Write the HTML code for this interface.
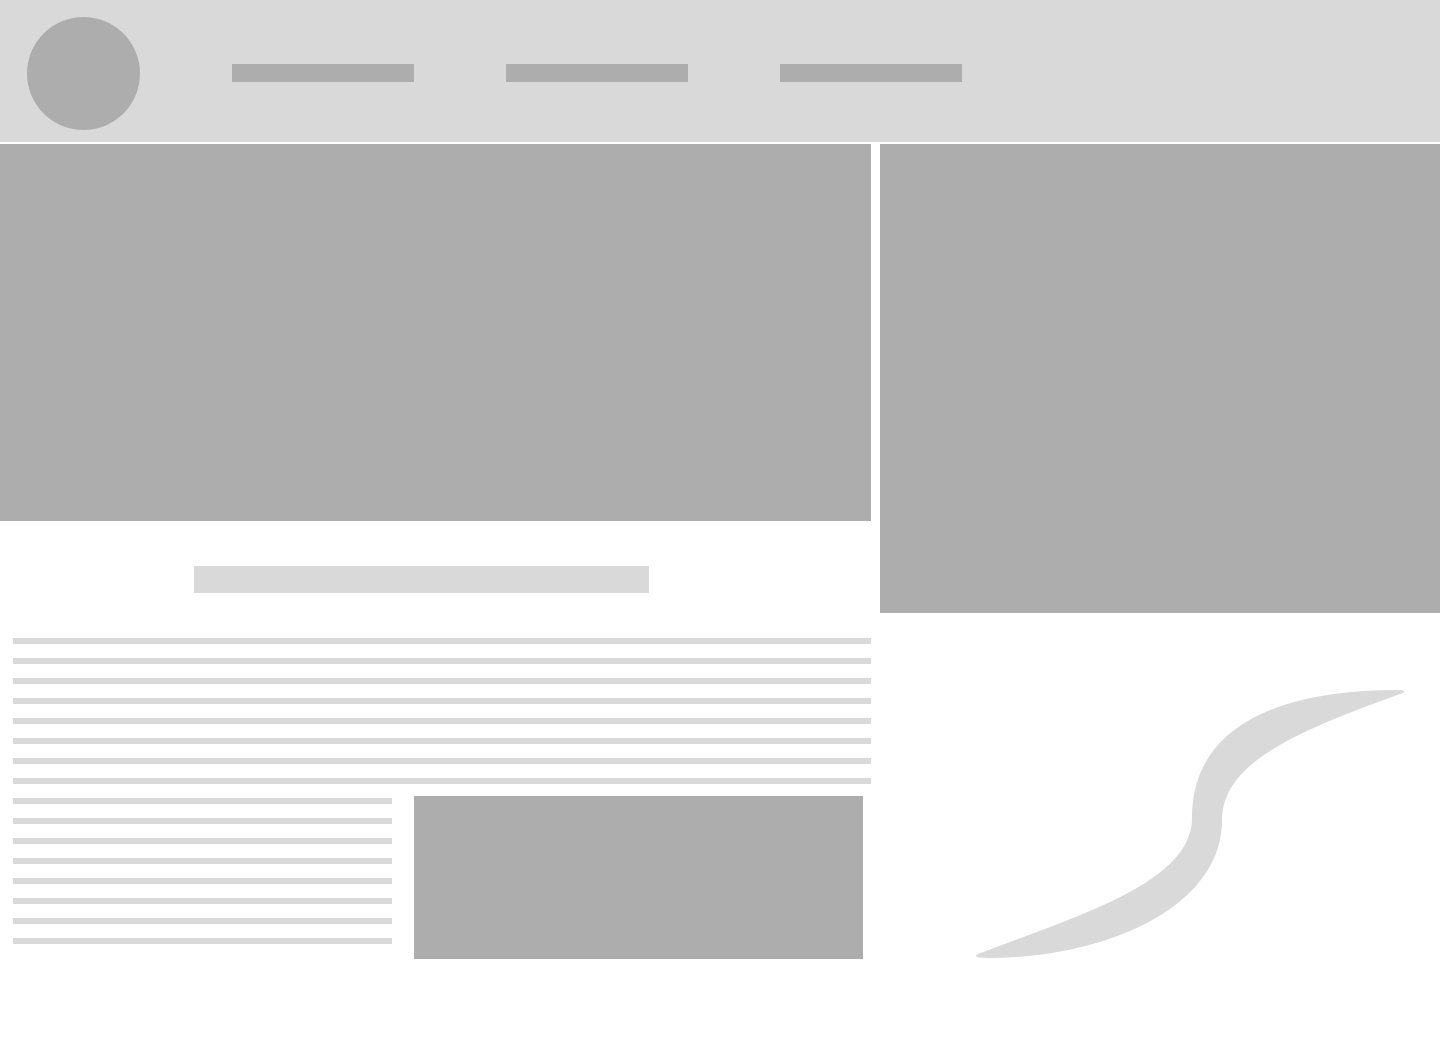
<!DOCTYPE html>
<html><head><meta charset="utf-8"><style>
html,body{margin:0;padding:0;background:#fff;width:1440px;height:1055px;overflow:hidden;position:relative}
div{position:absolute}
.g{background:#adadad}
.l{background:#d9d9d9}
</style></head><body>
<div class="l" style="left:0;top:0;width:1440px;height:142px"></div>
<div class="g" style="left:27px;top:17px;width:113px;height:113px;border-radius:50%"></div>
<div class="g" style="left:232px;top:64px;width:182px;height:18px"></div>
<div class="g" style="left:506px;top:64px;width:182px;height:18px"></div>
<div class="g" style="left:780px;top:64px;width:182px;height:18px"></div>
<div class="g" style="left:0;top:144px;width:871px;height:377px"></div>
<div class="g" style="left:880px;top:144px;width:560px;height:469px"></div>
<div class="l" style="left:194px;top:566px;width:455px;height:27px"></div>
<div class="l" style="left:13px;top:638px;width:858px;height:6px"></div>
<div class="l" style="left:13px;top:658px;width:858px;height:6px"></div>
<div class="l" style="left:13px;top:678px;width:858px;height:6px"></div>
<div class="l" style="left:13px;top:698px;width:858px;height:6px"></div>
<div class="l" style="left:13px;top:718px;width:858px;height:6px"></div>
<div class="l" style="left:13px;top:738px;width:858px;height:6px"></div>
<div class="l" style="left:13px;top:758px;width:858px;height:6px"></div>
<div class="l" style="left:13px;top:778px;width:858px;height:6px"></div>
<div class="l" style="left:13px;top:798px;width:379px;height:6px"></div>
<div class="l" style="left:13px;top:818px;width:379px;height:6px"></div>
<div class="l" style="left:13px;top:838px;width:379px;height:6px"></div>
<div class="l" style="left:13px;top:858px;width:379px;height:6px"></div>
<div class="l" style="left:13px;top:878px;width:379px;height:6px"></div>
<div class="l" style="left:13px;top:898px;width:379px;height:6px"></div>
<div class="l" style="left:13px;top:918px;width:379px;height:6px"></div>
<div class="l" style="left:13px;top:938px;width:379px;height:6px"></div>
<div class="g" style="left:414px;top:796px;width:449px;height:163px"></div>
<svg style="position:absolute;left:0;top:0" width="1440" height="1055">
<path fill="#d9d9d9" d="M978,954 C1080,915 1192,882 1192,818 C1192,720 1290,690 1398,690 C1406,690 1406,692 1400,694 C1300,730 1222,762 1222,820 C1222,910 1100,958 990,958 C974,958 974,956 978,954 Z"/>
</svg>
</body></html>
